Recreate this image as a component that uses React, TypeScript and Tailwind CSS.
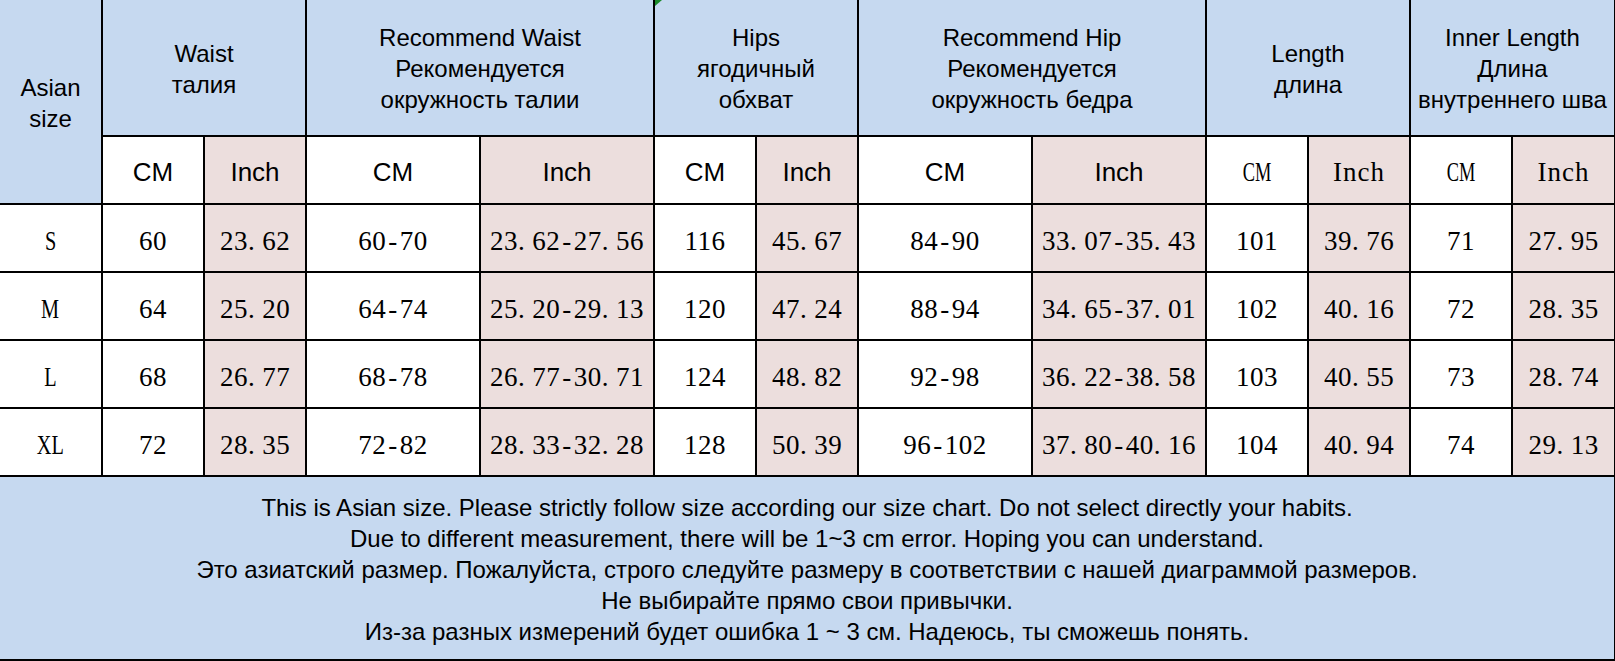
import React from "react";

const sans = "font-['Liberation_Sans',Arial,sans-serif]";
const serif = "font-['Liberation_Serif','Times_New_Roman',serif]";

const BLUE = "bg-[#c6d9f0]";
const PINK = "bg-[#ecdedd]";

function Num({ v }: { v: string }) {
  const parts: React.ReactNode[] = [];
  v.split("").forEach((ch, i) => {
    if (ch === ".") {
      parts.push(
        <span key={i} className="mr-[7px]">
          .
        </span>
      );
    } else if (ch === "-") {
      parts.push(
        <span key={i} className="mx-[2px]">
          -
        </span>
      );
    } else {
      parts.push(<span key={i}>{ch}</span>);
    }
  });
  return <>{parts}</>;
}

const rows = [
  ["S", "60", "23.62", "60-70", "23.62-27.56", "116", "45.67", "84-90", "33.07-35.43", "101", "39.76", "71", "27.95"],
  ["M", "64", "25.20", "64-74", "25.20-29.13", "120", "47.24", "88-94", "34.65-37.01", "102", "40.16", "72", "28.35"],
  ["L", "68", "26.77", "68-78", "26.77-30.71", "124", "48.82", "92-98", "36.22-38.58", "103", "40.55", "73", "28.74"],
  ["XL", "72", "28.35", "72-82", "28.33-32.28", "128", "50.39", "96-102", "37.80-40.16", "104", "40.94", "74", "29.13"],
];

const groups = [
  ["Waist", "талия"],
  ["Recommend Waist", "Рекомендуется", "окружность талии"],
  ["Hips", "ягодичный", "обхват"],
  ["Recommend Hip", "Рекомендуется", "окружность бедра"],
  ["Length", "длина"],
  ["Inner Length", "Длина", "внутреннего шва"],
];

export default function App() {
  return (
    <div className="w-[1615px] h-[661px] bg-white">
      <div
        className={`grid w-[1615px] h-[661px] bg-black gap-[2px] pr-[1px] pb-[2px] grid-cols-[101px_100px_100px_172px_172px_100px_100px_172px_172px_100px_100px_100px_101px] grid-rows-[135px_66px_66px_66px_66px_66px_182px] text-black`}
      >
        {/* Header row 1 */}
        <div
          className={`row-span-2 ${BLUE} ${sans} text-[24px] leading-[31px] flex flex-col items-center justify-center text-center pt-[2px]`}
        >
          <span>Asian</span>
          <span>size</span>
        </div>
        {groups.map((g, i) => (
          <div
            key={i}
            className={`relative col-span-2 ${BLUE} ${sans} text-[24px] leading-[31px] flex flex-col items-center justify-center text-center whitespace-nowrap pt-[2px]`}
          >
            {i === 2 && (
              <svg
                className="absolute left-0 top-0"
                width="7"
                height="6"
                viewBox="0 0 7 6"
              >
                <polygon points="0,0 7,0 0,6" fill="#1a8a2a" />
              </svg>
            )}
            {g.map((line, j) => (
              <span key={j}>{line}</span>
            ))}
          </div>
        ))}

        {/* Header row 2 */}
        {[0, 1, 2, 3].map((i) => (
          <React.Fragment key={i}>
            <div className={`bg-white ${sans} text-[26px] flex items-center justify-center pt-[4px]`}>
              CM
            </div>
            <div className={`${PINK} ${sans} text-[26px] flex items-center justify-center pt-[4px]`}>
              Inch
            </div>
          </React.Fragment>
        ))}
        {[0, 1].map((i) => (
          <React.Fragment key={`s${i}`}>
            <div className={`bg-white ${serif} text-[27px] flex items-center justify-center pt-[4px]`}>
              <span className="inline-block scale-x-[0.68]">CM</span>
            </div>
            <div className={`${PINK} ${serif} text-[27px] tracking-[1px] flex items-center justify-center pt-[4px]`}>
              Inch
            </div>
          </React.Fragment>
        ))}

        {/* Data rows */}
        {rows.map((r, ri) => (
          <React.Fragment key={ri}>
            {r.map((cell, ci) => {
              const pink = ci === 2 || ci === 4 || ci === 6 || ci === 8 || ci === 10 || ci === 12;
              return (
                <div
                  key={ci}
                  className={`${pink ? PINK : "bg-white"} ${serif} text-[27px] tracking-[0.5px] flex items-center justify-center whitespace-nowrap pt-[6px]`}
                >
                  {ci === 0 ? (
                    <span className="inline-block scale-x-[0.75]">{cell}</span>
                  ) : (
                    <span>
                      <Num v={cell} />
                    </span>
                  )}
                </div>
              );
            })}
          </React.Fragment>
        ))}

        {/* Footer */}
        <div
          className={`col-span-13 ${BLUE} ${sans} text-[24px] leading-[31px] flex flex-col items-center justify-center text-center whitespace-nowrap pt-[2px]`}
        >
          <span>
            This is Asian size. Please strictly follow size according our size chart. Do not select directly your habits.
          </span>
          <span>Due to different measurement, there will be 1~3 cm error. Hoping you can understand.</span>
          <span>
            Это азиатский размер. Пожалуйста, строго следуйте размеру в соответствии с нашей диаграммой размеров.
          </span>
          <span>Не выбирайте прямо свои привычки.</span>
          <span>Из-за разных измерений будет ошибка 1 ~ 3 см. Надеюсь, ты сможешь понять.</span>
        </div>
      </div>
    </div>
  );
}
